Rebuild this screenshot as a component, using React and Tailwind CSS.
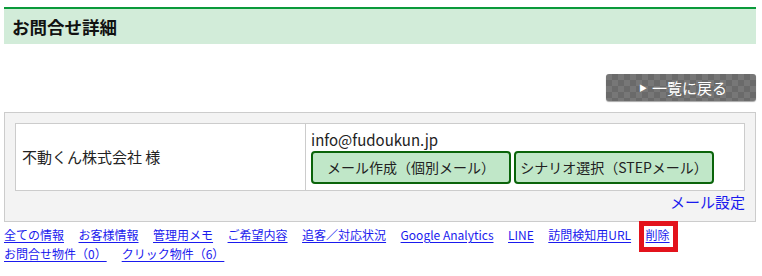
import React from "react";

const links = [
  "全ての情報",
  "お客様情報",
  "管理用メモ",
  "ご希望内容",
  "追客／対応状況",
  "Google Analytics",
  "LINE",
  "訪問検知用URL",
];

export default function App() {
  return (
    <div className="w-[762px] h-[276px] bg-white overflow-hidden font-['Noto_Sans_CJK_JP','Noto_Sans',sans-serif] text-[#222]">
      {/* page title */}
      <div className="mt-[7px] ml-[4px] w-[752px] h-[37px] border-t-2 border-[#0a9a3a] bg-[#d2ecd9] flex items-center pl-[8px]">
        <h1 className="text-[17.5px] font-bold leading-none text-[#111]">お問合せ詳細</h1>
      </div>

      {/* back button */}
      <div className="mt-[30px] flex justify-end w-[756px]">
        <button className="w-[150px] h-[27px] rounded-[3px] bg-[#6c6c6c] bg-[image:repeating-conic-gradient(#6a6a6a_0_25%,#777777_0_50%)] bg-[length:12px_12px] shadow-[0_1px_1px_rgba(0,0,0,0.35)] flex items-center justify-center gap-[5px] pl-[4px] text-white text-[15px] leading-none">
          <span className="text-[8px] leading-none">▶</span>
          <span>一覧に戻る</span>
        </button>
      </div>

      {/* detail panel */}
      <div className="mt-[11px] ml-[4px] w-[752px] border border-[#cccccc] bg-[#f3f3f3] px-[10px] pt-[10px] pb-[9px]">
        <div className="flex h-[68px] border border-[#cccccc] bg-white">
          <div className="w-[290px] shrink-0 border-r border-[#cccccc] flex items-center pl-[6px] text-[15px]">
            不動くん株式会社 様
          </div>
          <div className="flex-1 pl-[5px] pt-[6px]">
            <div className="text-[15px] leading-[20px]">info@fudoukun.jp</div>
            <div className="mt-[1px] flex gap-[3px]">
              <button className="w-[200px] h-[33px] rounded-[4px] border-2 border-[#0a640a] bg-[#c0e7c8] text-[14px] text-[#222]">
                メール作成（個別メール）
              </button>
              <button className="w-[200px] h-[33px] rounded-[4px] border-2 border-[#0a640a] bg-[#c0e7c8] text-[14px] text-[#222]">
                シナリオ選択（STEPメール）
              </button>
            </div>
          </div>
        </div>
        <div className="flex justify-end mt-[1px]">
          <a href="#" className="text-[15px] leading-[20px] text-[#1a1aee]">メール設定</a>
        </div>
      </div>

      {/* tab links */}
      <div className="ml-[4px] mt-[3px] flex flex-wrap gap-x-[14.5px] text-[12px] leading-[19px] text-[#1a1aee] w-[752px]">
        {links.map((l) => (
          <a key={l} href="#" className="underline underline-offset-2">{l}</a>
        ))}
        <a href="#" className="relative underline underline-offset-2">
          削除
          <span className="absolute left-[-7px] top-[-4px] w-[39px] h-[31px] border-[5px] border-[#e3131c]" />
        </a>
      </div>
      <div className="ml-[4px] flex gap-x-[15px] text-[12px] leading-[19px] text-[#1a1aee]">
        <a href="#" className="underline underline-offset-2">お問合せ物件（0）</a>
        <a href="#" className="underline underline-offset-2">クリック物件（6）</a>
      </div>
    </div>
  );
}
